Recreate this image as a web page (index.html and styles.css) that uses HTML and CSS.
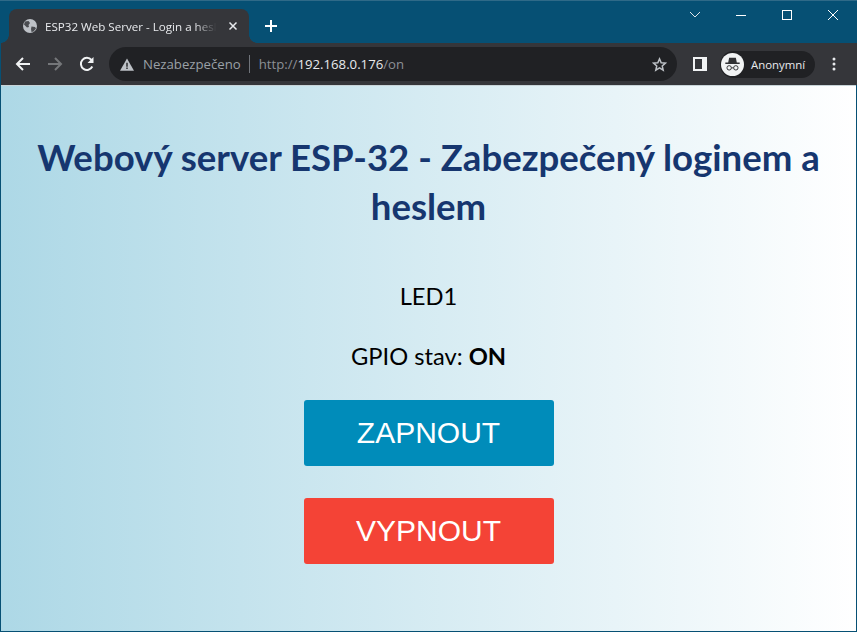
FILE: index.html
```html
<!DOCTYPE html>
<html lang="cs">
<head>
<meta charset="utf-8">
<title>ESP32 Web Server - Login a heslo</title>
<link rel="stylesheet" href="styles.css">
</head>
<body>
<div class="window">
  <header class="tabstrip">
    <div class="tab">
      <svg class="favicon" width="16" height="16" viewBox="0 0 16 16"><circle cx="8" cy="8" r="7" fill="#bdc1c6"/><path d="M3 3.500 6.500 3 8 5 6.500 7 7 9l-2 .5L2 6.500zM9.500 8.500l3.500.5 1 1.500-2.500 3-2 .5-.5-3z" fill="#4a4c50"/></svg>
      <span class="tab-title">ESP32 Web Server - Login a heslo</span>
      <svg class="tab-close" width="10" height="10" viewBox="0 0 10 10"><path d="M1.500 1.500l7 7M8.500 1.500l-7 7" stroke="#e8eaed" stroke-width="1.500"/></svg>
    </div>
    <svg class="new-tab" width="12" height="12" viewBox="0 0 12 12"><path d="M6 0v12M0 6h12" stroke="#fff" stroke-width="2"/></svg>
    <div class="window-controls">
      <svg class="ctl" width="46" height="16" viewBox="0 0 46 16"><path d="M18 5l5 5 5-5" fill="none" stroke="#dfe6ea" stroke-width="1"/></svg>
      <svg class="ctl" width="46" height="16" viewBox="0 0 46 16"><path d="M18 8.500h10" stroke="#fff" stroke-width="1"/></svg>
      <svg class="ctl" width="46" height="16" viewBox="0 0 46 16"><rect x="18.500" y="3.500" width="9" height="9" fill="none" stroke="#fff"/></svg>
      <svg class="ctl" width="46" height="16" viewBox="0 0 46 16"><path d="M18 3l10 10M28 3 18 13" stroke="#fff" stroke-width="1"/></svg>
    </div>
  </header>
  <nav class="toolbar">
    <svg class="nav-icon" width="16" height="16" viewBox="0 0 16 16"><path d="M15 8H2M8 2 2 8l6 6" fill="none" stroke="#f1f3f4" stroke-width="2"/></svg>
    <svg class="nav-icon" width="16" height="16" viewBox="0 0 16 16"><path d="M1 8h13M8 2l6 6-6 6" fill="none" stroke="#75777a" stroke-width="2"/></svg>
    <svg class="nav-icon" width="16" height="16" viewBox="0 0 16 16"><path d="M13.300 10.500A6 6 0 1 1 12.500 4" fill="none" stroke="#f1f3f4" stroke-width="2"/><path d="M14.500 1v6h-6z" fill="#f1f3f4"/></svg>
    <div class="omnibox">
      <svg class="warn" width="14" height="13" viewBox="0 0 16 14"><path d="M8 0 16 14H0z" fill="#bdc1c6"/><path d="M7.200 5h1.600v4.500H7.200zM7.200 10.500h1.600V12H7.200z" fill="#202124"/></svg>
      <span class="security">Nezabezpečeno</span>
      <span class="url"><span class="dim">http://</span>192.168.0.176<span class="dim">/on</span></span>
      <svg class="star" width="15" height="15" viewBox="0 0 24 24"><path d="M12 3l2.700 6.200 6.800.6-5.100 4.500 1.500 6.700L12 17.500 6.100 21l1.500-6.700L2.500 9.800l6.800-.6z" fill="none" stroke="#bdc1c6" stroke-width="2.400"/></svg>
    </div>
    <svg class="panel" width="14" height="14" viewBox="0 0 14 14"><path d="M0 0h14v14H0z" fill="#f1f3f4"/><path d="M2 2h7v10H2z" fill="#35363a"/></svg>
    <div class="profile">
      <svg class="avatar" width="23" height="23" viewBox="0 0 24 24"><circle cx="12" cy="12" r="12" fill="#f1f3f4"/><path d="M8.500 5h7l1 5h3v1.500h-15V10h3z" fill="#303134"/><circle cx="8.500" cy="15.500" r="2.300" fill="none" stroke="#303134"/><circle cx="15.500" cy="15.500" r="2.300" fill="none" stroke="#303134"/><path d="M10.800 15.500h2.400" stroke="#303134"/></svg>
      <span class="profile-name">Anonymní</span>
    </div>
    <svg class="menu" width="4" height="14" viewBox="0 0 4 14"><circle cx="2" cy="2" r="1.500" fill="#e8eaed"/><circle cx="2" cy="7" r="1.500" fill="#e8eaed"/><circle cx="2" cy="12" r="1.500" fill="#e8eaed"/></svg>
  </nav>
  <main class="page">
    <h1 class="heading">Webový server ESP-32 - Zabezpečený loginem a heslem</h1>
    <p class="line led">LED1</p>
    <p class="line state">GPIO stav: <strong>ON</strong></p>
    <a class="btn btn-on">ZAPNOUT</a>
    <a class="btn btn-off">VYPNOUT</a>
  </main>
</div>
</body>
</html>
```
FILE: styles.css
```css
* { box-sizing: border-box; }
html, body { margin: 0; height: 100%; }
body { overflow: hidden; background: #fff; }
.window {
  width: 857px; height: 632px;
  display: flex; flex-direction: column;
  font-family: "Open Sans", "Liberation Sans", sans-serif;
  background: #065074;
}
.tabstrip {
  height: 43px; flex: none;
  display: flex; align-items: flex-start;
  padding: 9px 0 0 9px;
  background: #065074;
  border-top: 1px solid #2f6a88;
}
.tab {
  position: relative;
  width: 240px; height: 34px;
  margin-top: -1px;
  display: flex; align-items: center;
  padding: 0 11px 0 13px;
  background: #35363a;
  border-radius: 8px 8px 0 0;
  color: #e8eaed;
}
.tab::before, .tab::after {
  content: ""; position: absolute; bottom: 0;
  width: 8px; height: 8px;
}
.tab::before { left: -8px; background: radial-gradient(circle at 0 0, transparent 7.5px, #35363a 8px); }
.tab::after { right: -8px; background: radial-gradient(circle at 100% 0, transparent 7.500px, #35363a 8px); }
.favicon { flex: none; margin-right: 7px; }
.tab-title {
  flex: 1; overflow: hidden; white-space: nowrap;
  font-size: 11.6px;
  -webkit-mask-image: linear-gradient(to right, #000 85%, transparent 98%);
  mask-image: linear-gradient(to right, #000 85%, transparent 98%);
}
.tab-close { flex: none; margin-left: 8px; }
.new-tab { margin: 10px 0 0 16px; flex: none; }
.window-controls { margin-left: auto; margin-top: -3px; display: flex; margin-right: 1px; }
.ctl { display: block; }
.toolbar {
  height: 42px; flex: none;
  display: flex; align-items: center;
  padding: 0 14px 0 14px;
  background: #35363a;
  border-left: 1px solid #065074;
}
.nav-icon { flex: none; margin-right: 16px; }
.omnibox {
  flex: none; width: 568px; height: 34px;
  margin-left: -2px;
  display: flex; align-items: center;
  padding: 0 10px 0 11px;
  background: #202124;
  border-radius: 17px;
  font-size: 13.2px;
  color: #9aa0a6;
}
.warn { flex: none; margin-right: 9px; }
.security { padding-right: 8px; border-right: 1px solid #70747a; line-height: 18px; color: #9aa0a6; }
.url { margin-left: 9px; color: #e8eaed; flex: 1; }
.dim { color: #8c9096; }
.star { flex: none; }
.panel { flex: none; margin-left: 16px; }
.profile {
  flex: none; height: 27px; width: 95px;
  margin-left: 13px;
  display: flex; align-items: center;
  padding: 0 0 0 1px;
  background: #202124;
  border-radius: 14px;
}
.avatar { flex: none; margin-right: 7px; }
.profile-name { font-size: 11.4px; color: #e8eaed; white-space: nowrap; }
.menu { flex: none; margin-left: 17px; }
.page {
  flex: 1; min-height: 0;
  margin: 0 1px 1px;
  display: flex; flex-direction: column; align-items: center;
  background: linear-gradient(to right, #add8e6, #fff);
  font-family: Lato, "Liberation Sans", sans-serif;
  color: #000;
  text-align: center;
  border-top: 1px solid #c8d4d8;
}
.heading {
  margin: 47px 0 0; width: 100%;
  font-size: 36.6px; line-height: 49px; font-weight: 700;
  color: #16366f;
}
.line { margin: 0; font-size: 23.7px; line-height: 30px; }
.led { margin-top: 50px; }
.state { margin-top: 30px; }
.btn {
  display: flex; align-items: center; justify-content: center;
  width: 250px; height: 66px;
  border-radius: 3px;
  color: #fff;
  font-family: "Liberation Sans", Arial, sans-serif;
  font-size: 30px;
  padding-bottom: 1px;
}
.btn-on { margin-top: 29px; background: #008cba; }
.btn-off { margin-top: 32px; background: #f44336; }
```
